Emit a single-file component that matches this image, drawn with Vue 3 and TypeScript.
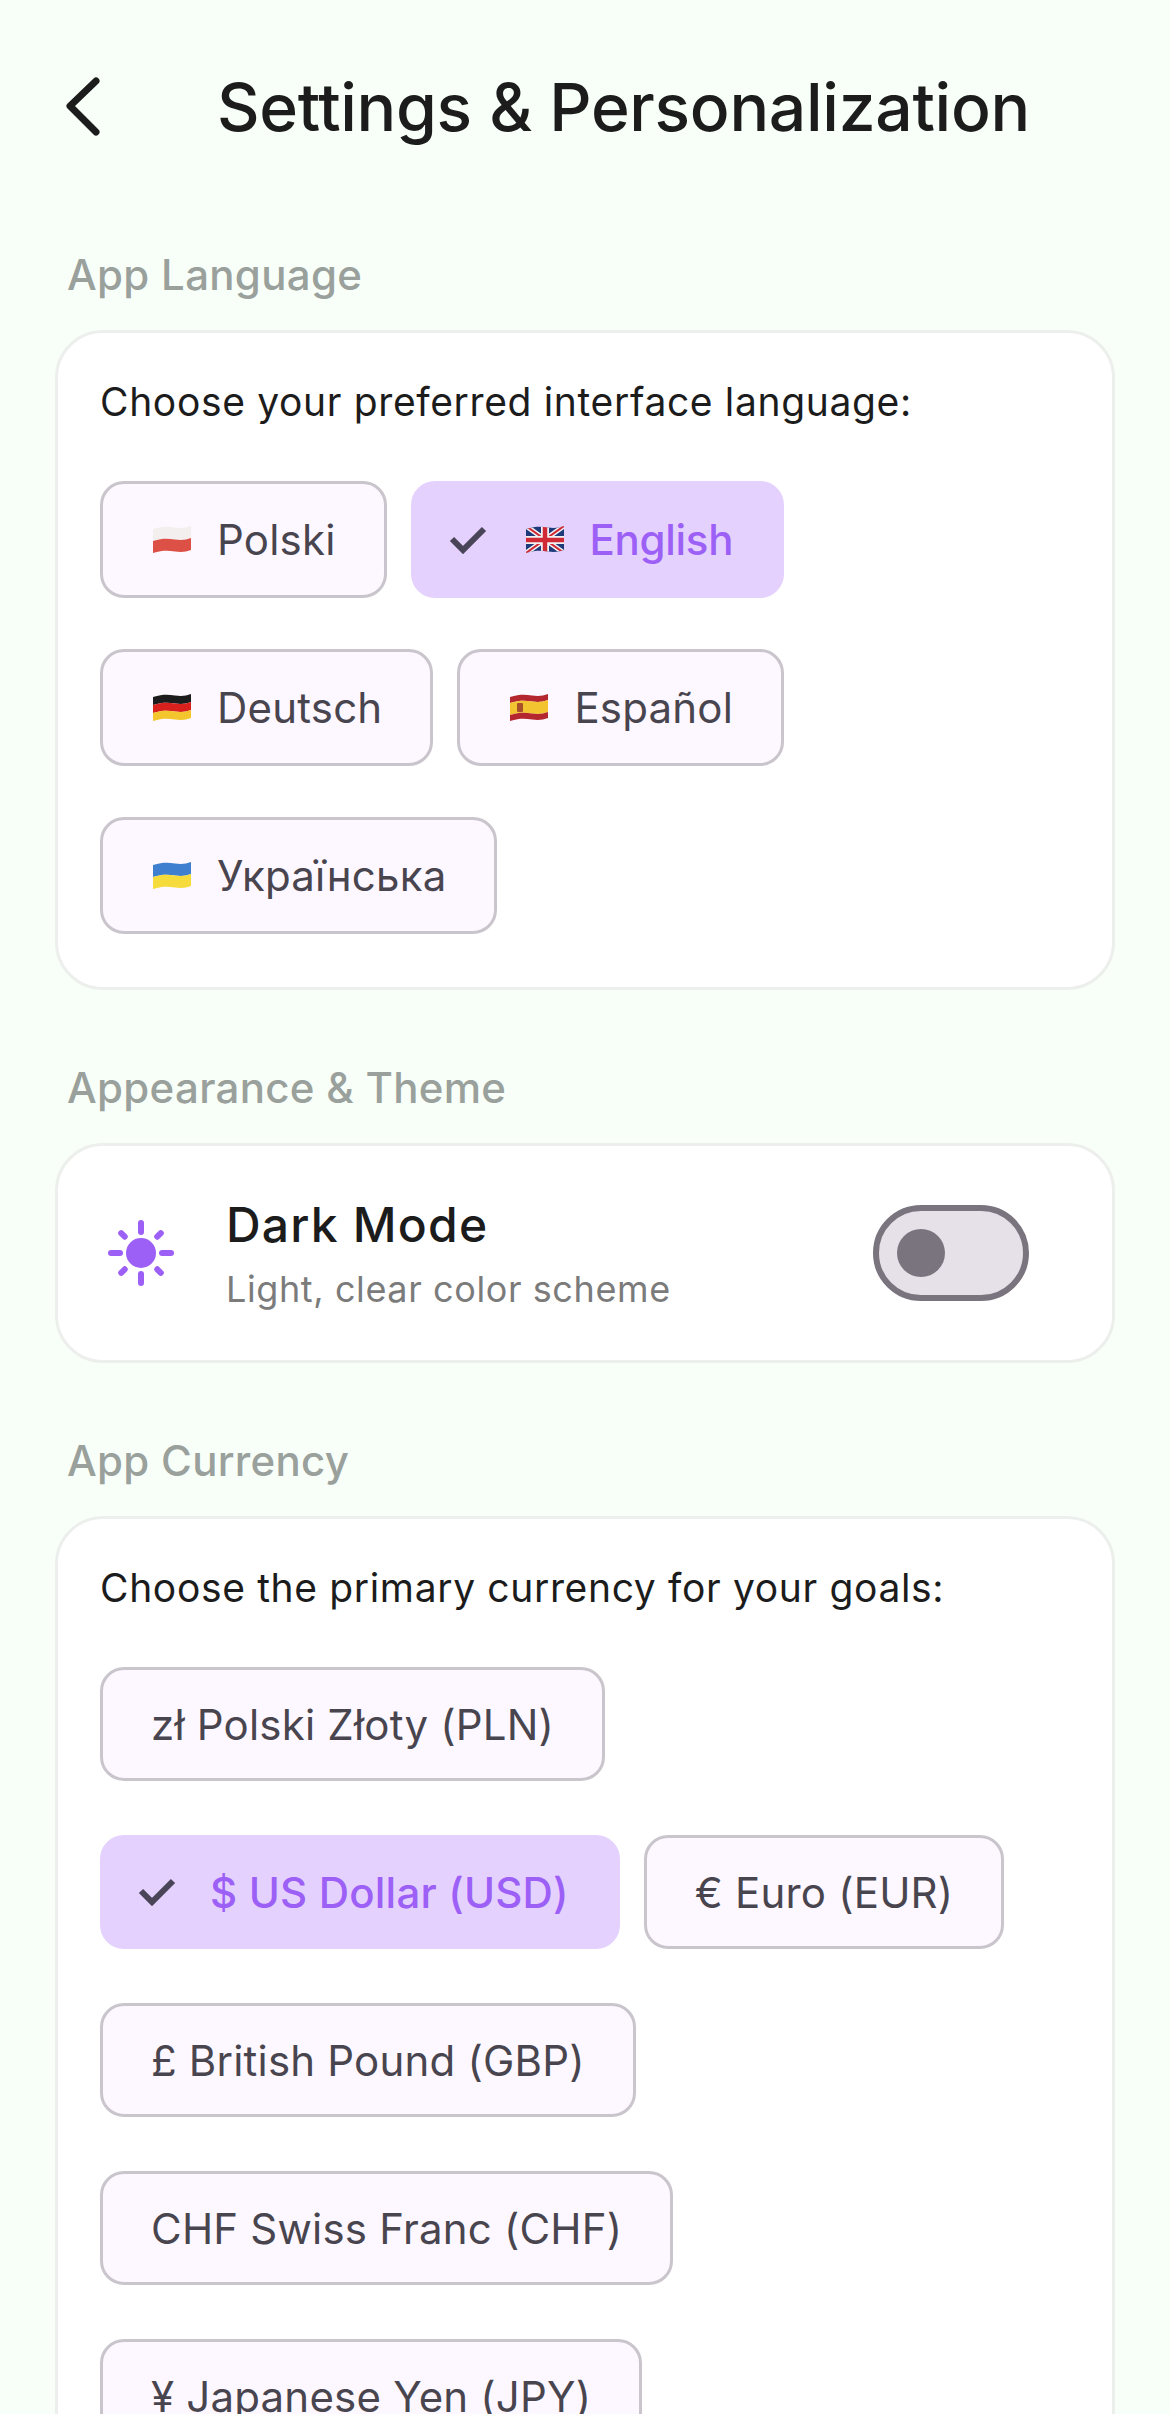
<script setup lang="ts">
interface Band { from: number; to: number; color: string }
interface Chip { label: string; flag?: string; selected?: boolean }

// left edge of a band sits lower than the right one, like the waving emoji flags
const wave = (from: number, to: number) => {
  const a = from + 3
  const b = to + 3
  return `M0 ${a}C10 ${a - 3} 15 ${a - 2.5} 22 ${a - 1.5}C28 ${a - 0.5} 33 ${a - 1} 38 ${a - 3}` +
    `V${b - 3}C33 ${b - 1} 28 ${b - 0.5} 22 ${b - 1.5}C15 ${b - 2.5} 10 ${b - 3} 0 ${b}Z`
}

const flags: Record<string, Band[]> = {
  pl: [{ from: 0, to: 12, color: '#f3efee' }, { from: 12, to: 24, color: '#dc5046' }],
  de: [{ from: 0, to: 8, color: '#1c1c1c' }, { from: 8, to: 16, color: '#d8201c' }, { from: 16, to: 24, color: '#f2c62c' }],
  es: [{ from: 0, to: 6, color: '#b5272f' }, { from: 6, to: 18, color: '#f2c530' }, { from: 18, to: 24, color: '#b5272f' }],
  ua: [{ from: 0, to: 12, color: '#3f7fcf' }, { from: 12, to: 24, color: '#f5dc3c' }]
}

const languages: Chip[] = [
  { label: 'Polski', flag: 'pl' },
  { label: 'English', flag: 'gb', selected: true },
  { label: 'Deutsch', flag: 'de' },
  { label: 'Español', flag: 'es' },
  { label: 'Українська', flag: 'ua' }
]

const currencies: Chip[] = [
  { label: 'zł Polski Złoty (PLN)' },
  { label: '$ US Dollar (USD)', selected: true },
  { label: '€ Euro (EUR)' },
  { label: '£ British Pound (GBP)' },
  { label: 'CHF Swiss Franc (CHF)' },
  { label: '¥ Japanese Yen (JPY)' }
]

const sunRays = [0, 45, 90, 135, 180, 225, 270, 315]
</script>

<template>
  <div class="page">
    <header class="topbar">
      <svg class="back" width="38" height="60" viewBox="0 0 38 60">
        <path d="M31 4 5 29 31 55" />
      </svg>
      <h1>Settings &amp; Personalization</h1>
    </header>

    <h2 class="section-label first">App Language</h2>
    <section class="card">
      <p class="hint">Choose your preferred interface language:</p>
      <div class="chips lang">
        <button v-for="c in languages" :key="c.label" class="chip" :class="{ selected: c.selected }">
          <svg v-if="c.selected" class="check" width="38" height="28" viewBox="0 0 38 28">
            <path d="M3 13 14 24 35 3" />
          </svg>
          <svg class="flag" width="38" height="27" viewBox="0 0 38 27">
            <template v-if="c.flag === 'gb'">
              <clipPath id="gb-clip"><path :d="wave(0, 24)" /></clipPath>
              <g clip-path="url(#gb-clip)">
                <rect width="38" height="27" fill="#1f3a7a" />
                <path d="M0 0 38 27M38 0 0 27" stroke="#f2f2f2" stroke-width="5" />
                <path d="M0 0 38 27M38 0 0 27" stroke="#cf2a36" stroke-width="2" />
                <path d="M19 0V27M0 14H38" stroke="#f2f2f2" stroke-width="8" />
                <path d="M19 0V27M0 14H38" stroke="#cf2a36" stroke-width="4.5" />
              </g>
            </template>
            <template v-else>
              <path v-for="b in flags[c.flag!]" :key="b.from" :d="wave(b.from, b.to)" :fill="b.color" />
              <rect v-if="c.flag === 'es'" x="7" y="9" width="6" height="9" rx="1" fill="#a8502c" />
            </template>
          </svg>
          <span>{{ c.label }}</span>
        </button>
      </div>
    </section>

    <h2 class="section-label">Appearance &amp; Theme</h2>
    <section class="card theme">
      <svg class="sun" width="66" height="66" viewBox="0 0 66 66">
        <circle cx="33" cy="33" r="15" />
        <line v-for="r in sunRays" :key="r" x1="33" y1="3" x2="33" :y2="r % 90 ? 8 : 12"
          :transform="r % 90 ? `rotate(${r} 33 33) translate(0 2)` : `rotate(${r} 33 33)`" />
      </svg>
      <div class="theme-text">
        <div class="theme-title">Dark Mode</div>
        <div class="theme-sub">Light, clear color scheme</div>
      </div>
      <div class="switch"><div class="thumb"></div></div>
    </section>

    <h2 class="section-label">App Currency</h2>
    <section class="card">
      <p class="hint">Choose the primary currency for your goals:</p>
      <div class="chips">
        <button v-for="c in currencies" :key="c.label" class="chip" :class="{ selected: c.selected }">
          <svg v-if="c.selected" class="check" width="38" height="28" viewBox="0 0 38 28">
            <path d="M3 13 14 24 35 3" />
          </svg>
          <span>{{ c.label }}</span>
        </button>
      </div>
    </section>
  </div>
</template>

<style>
html, body {
  margin: 0;
  background: #f7fff8;
}
</style>

<style scoped>
.page {
  height: 2414px;
  overflow: hidden;
  font-family: Inter, "Noto Sans", sans-serif;
  background: #f7fff8;
}
.topbar {
  height: 214px;
  padding-left: 65px;
  box-sizing: border-box;
  display: flex;
  align-items: center;
  gap: 114px;
}
.back {
  flex: none;
}
.back path {
  fill: none;
  stroke: #1c1c1c;
  stroke-width: 7;
  stroke-linecap: round;
  stroke-linejoin: round;
}
h1 {
  margin: 0;
  font-size: 66px;
  line-height: 80px;
  font-weight: 500;
  letter-spacing: -0.3px;
  color: #1c1c1c;
}
.section-label {
  margin: 73px 0 30px 67px;
  font-size: 42px;
  line-height: 50px;
  font-weight: 500;
  letter-spacing: 0.3px;
  color: #9aa09b;
}
.section-label.first {
  margin-top: 36px;
}
.card {
  margin: 0 55px;
  padding: 45px 42px 53px;
  background: #fff;
  border: 3px solid #edefed;
  border-radius: 48px;
}
.hint {
  margin: 0 0 55px;
  font-size: 39px;
  line-height: 48px;
  letter-spacing: 0.65px;
  color: #1c1c1c;
}
.chips {
  display: flex;
  flex-wrap: wrap;
  gap: 54px 24px;
}
.chips.lang {
  row-gap: 51px;
}
.chip {
  display: flex;
  align-items: center;
  height: 114px;
  padding: 0 48px;
  box-sizing: border-box;
  background: #fdf8ff;
  border: 3px solid #cac5cc;
  border-radius: 24px;
  font-family: inherit;
  font-size: 42px;
  letter-spacing: 0.2px;
  color: #49454f;
}
.lang .chip {
  height: 117px;
}
.flag {
  flex: none;
  margin: 0 26px 0 2px;
}
.chip.selected {
  background: #e5d1fd;
  border-color: #e5d1fd;
  color: #9c60f7;
  font-weight: 500;
  padding: 0 48px 0 35px;
}
.lang .chip.selected {
  letter-spacing: -0.3px;
}
.selected .flag {
  margin-left: 5px;
}
.check {
  flex: none;
  margin-right: 34px;
}
.check path {
  fill: none;
  stroke: #4a4458;
  stroke-width: 6;
}
.theme {
  display: flex;
  align-items: center;
  height: 220px;
  padding: 0 83px 0 50px;
  box-sizing: border-box;
}
.sun {
  flex: none;
  margin-right: 52px;
}
.sun circle {
  fill: #9c60f7;
}
.sun line {
  stroke: #9c60f7;
  stroke-width: 6;
  stroke-linecap: round;
}
.theme-text {
  flex: 1;
}
.theme-title {
  font-size: 48px;
  line-height: 60px;
  font-weight: 500;
  letter-spacing: 1.2px;
  color: #1c1c1c;
}
.theme-sub {
  margin-top: 12px;
  font-size: 36px;
  line-height: 44px;
  letter-spacing: 0.6px;
  color: #7b7b7b;
}
.switch {
  flex: none;
  display: flex;
  align-items: center;
  width: 156px;
  height: 96px;
  padding-left: 18px;
  box-sizing: border-box;
  background: #e6e0e9;
  border: 6px solid #79747e;
  border-radius: 48px;
}
.thumb {
  width: 48px;
  height: 48px;
  border-radius: 50%;
  background: #79747e;
}
</style>
